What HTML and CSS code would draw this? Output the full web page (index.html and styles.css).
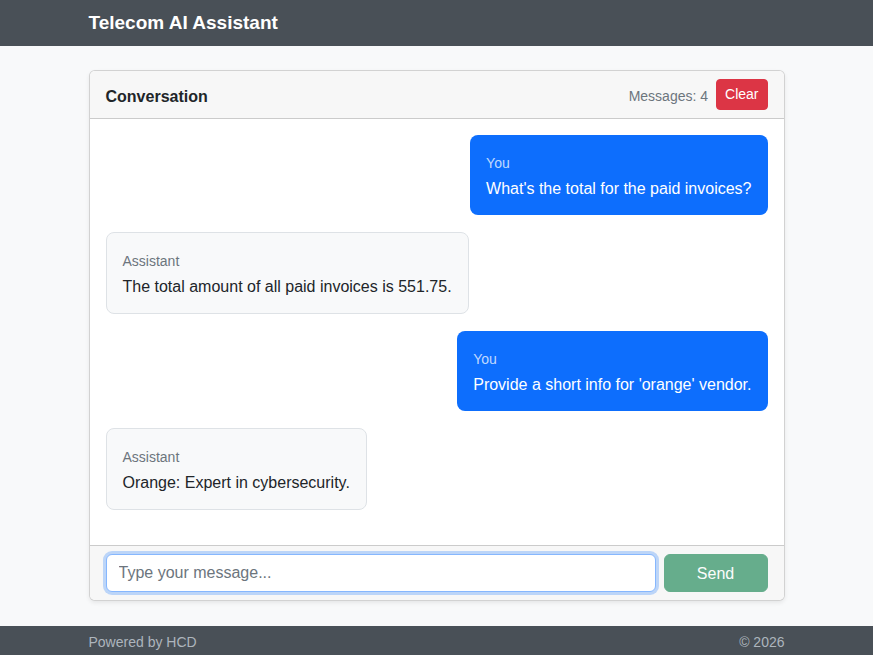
FILE: index.html
```html
<!DOCTYPE html>
<html lang="en">
<head>
    <meta charset="UTF-8">
    <meta name="viewport" content="width=device-width, initial-scale=1.0">
    <title>Telecom AI Assistant</title>
    <link rel="stylesheet" href="styles.css">
</head>
<body>
    <header class="topbar">
        <div class="container">
            <span class="brand">Telecom AI Assistant</span>
        </div>
    </header>

    <main class="container main">
        <div class="chat-card">
            <div class="chat-header">
                <span class="chat-title">Conversation</span>
                <div class="chat-meta">
                    <span class="msg-count">Messages: 4</span>
                    <button class="btn-clear">Clear</button>
                </div>
            </div>

            <div class="chat-body">
                <div class="bubble user">
                    <div class="bubble-label">You</div>
                    <div class="bubble-text">What's the total for the paid invoices?</div>
                </div>
                <div class="bubble bot">
                    <div class="bubble-label">Assistant</div>
                    <div class="bubble-text">The total amount of all paid invoices is 551.75.</div>
                </div>
                <div class="bubble user">
                    <div class="bubble-label">You</div>
                    <div class="bubble-text">Provide a short info for 'orange' vendor.</div>
                </div>
                <div class="bubble bot">
                    <div class="bubble-label">Assistant</div>
                    <div class="bubble-text">Orange: Expert in cybersecurity.</div>
                </div>
            </div>

            <div class="chat-footer">
                <input type="text" class="chat-input" placeholder="Type your message...">
                <button class="btn-send" disabled>Send</button>
            </div>
        </div>
    </main>

    <footer class="bottombar">
        <div class="container bottom-row">
            <span>Powered by HCD</span>
            <span>&copy; 2026</span>
        </div>
    </footer>
</body>
</html>
```

FILE: styles.css
```css
* {
    box-sizing: border-box;
}
body {
    font-family: "Segoe UI", "Liberation Sans", Arial, sans-serif;
    margin: 0;
    padding: 0;
    min-height: 100vh;
    display: flex;
    flex-direction: column;
    background-color: #f8f9fa;
    color: #212529;
    font-size: 16px;
    line-height: 1.5;
}
.container {
    width: 720px;
    margin: 0 auto;
    padding: 0 12px;
}
.topbar {
    background-color: #495057;
    height: 46px;
    display: flex;
    align-items: center;
}
.brand {
    color: #fff;
    font-size: 19px;
    font-weight: bold;
}
.main {
    flex: 1;
    padding-top: 24px;
    padding-bottom: 24px;
}
.chat-card {
    background-color: #fff;
    border: 1px solid rgba(0, 0, 0, 0.175);
    border-radius: 6px;
    box-shadow: 0 2px 4px rgba(0, 0, 0, 0.075);
    overflow: hidden;
}
.chat-header {
    display: flex;
    justify-content: space-between;
    align-items: center;
    padding: 8px 16px;
    background-color: #f7f7f7;
    border-bottom: 1px solid rgba(0, 0, 0, 0.175);
}
.chat-title {
    font-weight: 600;
    padding-top: 4px;
}
.chat-meta {
    display: flex;
    align-items: center;
    gap: 8px;
}
.msg-count {
    font-size: 14px;
    color: #6c757d;
    padding-top: 3px;
}
.btn-clear {
    font-family: inherit;
    font-size: 14px;
    line-height: 1.5;
    padding: 4px 8px;
    color: #fff;
    background-color: #dc3545;
    border: 1px solid #dc3545;
    border-radius: 4px;
    cursor: pointer;
}
.chat-body {
    height: 426px;
    overflow-y: auto;
    padding: 16px;
    display: flex;
    flex-direction: column;
    gap: 17px;
}
.bubble {
    max-width: 75%;
    padding: 18px 16px 14px;
    border-radius: 8px;
}
.bubble.user {
    align-self: flex-end;
    background-color: #0d6efd;
    color: #fff;
}
.bubble.bot {
    align-self: flex-start;
    background-color: #f8f9fa;
    border: 1px solid #dee2e6;
}
.bubble-label {
    font-size: 14px;
    margin-bottom: 3px;
    color: #6c757d;
}
.bubble.user .bubble-label {
    color: rgba(255, 255, 255, 0.75);
}
.chat-footer {
    display: flex;
    gap: 8px;
    padding: 8px 16px;
    background-color: #f7f7f7;
    border-top: 1px solid rgba(0, 0, 0, 0.175);
}
.chat-input {
    flex: 1;
    font-family: inherit;
    font-size: 16px;
    line-height: 1.5;
    padding: 6px 12px;
    color: #212529;
    background-color: #fff;
    border: 1px solid #86b7fe;
    border-radius: 6px;
    box-shadow: 0 0 0 3px rgba(13, 110, 253, 0.25);
    outline: none;
}
.chat-input::placeholder {
    color: #6c757d;
}
.btn-send {
    width: 104px;
    font-family: inherit;
    font-size: 16px;
    line-height: 1.5;
    padding: 7px 12px 5px;
    color: #fff;
    background-color: #198754;
    border: 1px solid #198754;
    border-radius: 6px;
    opacity: 0.65;
}
.bottombar {
    background-color: #495057;
    color: #adb5bd;
    font-size: 14px;
    padding: 6px 0 2px;
}
.bottom-row {
    display: flex;
    justify-content: space-between;
}
```
